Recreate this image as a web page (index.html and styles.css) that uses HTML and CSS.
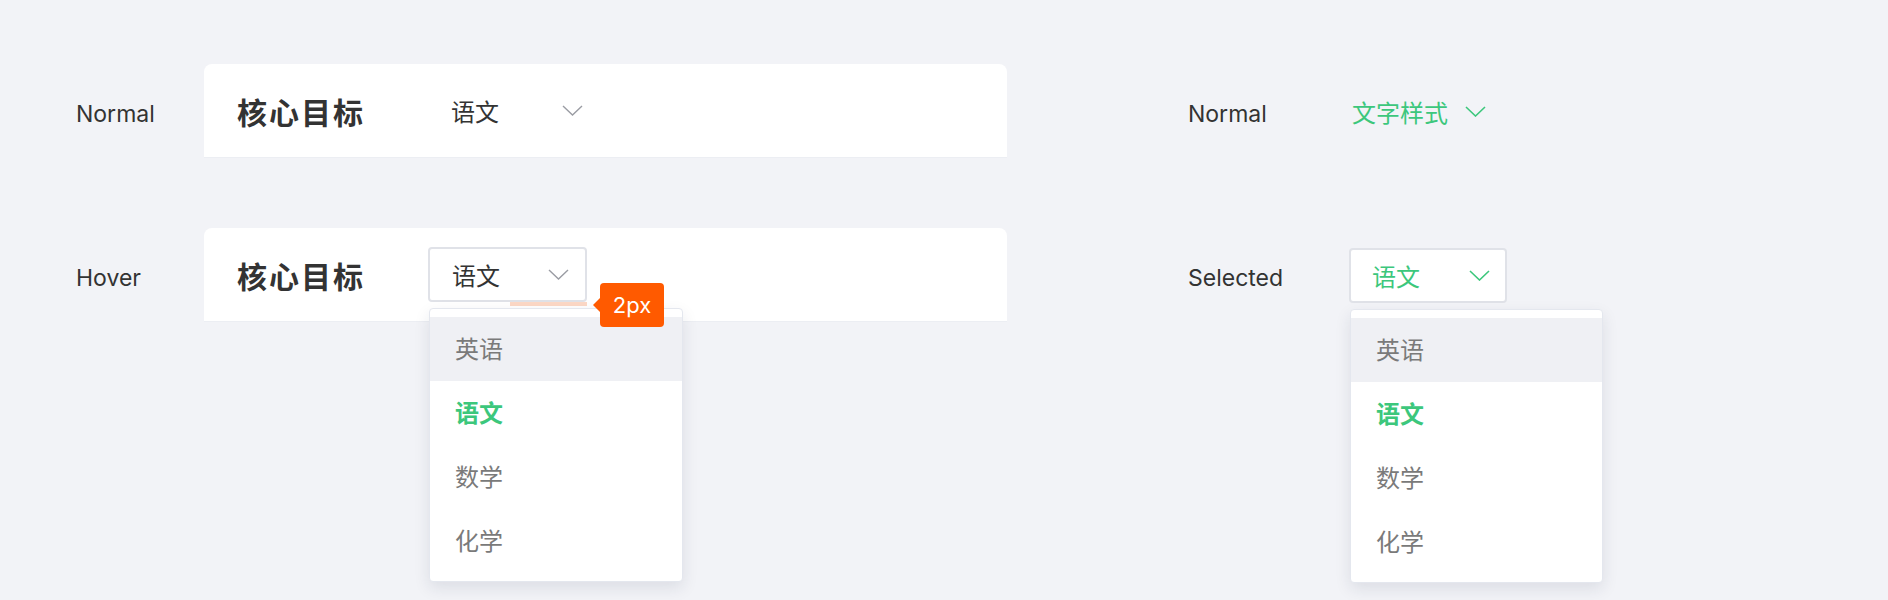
FILE: index.html
```html
<!DOCTYPE html>
<html lang="zh-CN">
<head>
<meta charset="utf-8">
<title>Select states</title>
<link rel="stylesheet" href="styles.css">
</head>
<body>
<div class="page">
  <section class="col col-left">
    <div class="row">
      <div class="label">Normal</div>
      <div class="card">
        <div class="card-title">核心目标</div>
        <div class="select select-plain">
          <span class="select-text">语文</span>
          <svg class="chev" width="21" height="11" viewBox="0 0 21 11"><polyline points="1,1 10.5,10 20,1" fill="none" stroke="#9a9ca3" stroke-width="1.4"/></svg>
        </div>
      </div>
    </div>
    <div class="row">
      <div class="label">Hover</div>
      <div class="card">
        <div class="card-title">核心目标</div>
        <div class="select select-box">
          <span class="select-text">语文</span>
          <svg class="chev" width="21" height="11" viewBox="0 0 21 11"><polyline points="1,1 10.5,10 20,1" fill="none" stroke="#9a9ca3" stroke-width="1.4"/></svg>
          <span class="gap-mark"></span>
          <span class="tag">2px</span>
          <ul class="menu">
            <li class="menu-item is-hover">英语</li>
            <li class="menu-item is-active">语文</li>
            <li class="menu-item">数学</li>
            <li class="menu-item">化学</li>
          </ul>
        </div>
      </div>
    </div>
  </section>
  <section class="col col-right">
    <div class="row">
      <div class="label label-right">Normal</div>
      <div class="select select-link">
        <span class="select-text">文字样式</span>
        <svg class="chev" width="21" height="11" viewBox="0 0 21 11"><polyline points="1,1 10.5,10 20,1" fill="none" stroke="#3cc77c" stroke-width="1.6"/></svg>
      </div>
    </div>
    <div class="row">
      <div class="label label-right">Selected</div>
      <div class="select select-box select-green">
        <span class="select-text">语文</span>
        <svg class="chev" width="21" height="11" viewBox="0 0 21 11"><polyline points="1,1 10.5,10 20,1" fill="none" stroke="#3cc77c" stroke-width="1.6"/></svg>
        <ul class="menu menu-right">
          <li class="menu-item is-hover">英语</li>
          <li class="menu-item is-active">语文</li>
          <li class="menu-item">数学</li>
          <li class="menu-item">化学</li>
        </ul>
      </div>
    </div>
  </section>
</div>
</body>
</html>
```
FILE: styles.css
```css
* { box-sizing: border-box; }
html, body {
  margin: 0;
  padding: 0;
  background: #f2f3f7;
  font-family: "Inter", "Noto Sans CJK SC", sans-serif;
  color: #333;
}
.page {
  display: flex;
  padding: 64px 0 0 76px;
  height: 600px;
  overflow: hidden;
}
.col {
  display: flex;
  flex-direction: column;
  gap: 70px;
}
.col-left { width: 931px; }
.col-right { margin-left: 181px; }
.row {
  display: flex;
  align-items: center;
  height: 94px;
}
.label {
  width: 128px;
  flex: none;
  font-size: 23px;
  color: #333;
  padding-top: 5px;
}
.label-right { width: 161px; }
.card {
  width: 803px;
  height: 94px;
  background: #fff;
  border-radius: 8px 8px 0 0;
  border-bottom: 1px solid #eceef3;
  display: flex;
  align-items: center;
  padding-left: 33px;
}
.card-title {
  width: 191px;
  flex: none;
  font-family: "Noto Sans CJK SC", sans-serif;
  font-size: 30px;
  font-weight: 700;
  letter-spacing: 2px;
  color: #333;
}
.select {
  position: relative;
  display: flex;
  align-items: center;
  font-family: "Noto Sans CJK SC", sans-serif;
  font-size: 24px;
  color: #333;
}
.select-plain {
  padding-left: 23px;
  gap: 63px;
}
.select-box {
  width: 159px;
  height: 55px;
  border: 2px solid #e0e2e8;
  border-radius: 4px;
  background: #fff;
  padding: 0 16px 0 22px;
  justify-content: space-between;
}
.select-green { width: 158px; padding: 0 15px 0 21px; }
.select-green .select-text,
.select-link { color: #3cc77c; }
.select-link {
  padding-left: 3px;
  gap: 17px;
}
.chev { display: block; flex: none; }
.gap-mark {
  position: absolute;
  left: 80px;
  right: -2px;
  top: calc(100% + 2px);
  height: 4px;
  background: #fcd8c6;
}
.tag {
  position: absolute;
  left: 170px;
  top: 34px;
  width: 64px;
  height: 44px;
  background: #ff5a00;
  color: #fff;
  border-radius: 4px;
  font-family: "Inter", sans-serif;
  font-size: 22px;
  display: flex;
  align-items: center;
  justify-content: center;
  z-index: 3;
}
.tag::before {
  content: "";
  position: absolute;
  left: -7px;
  top: 50%;
  margin-top: -7px;
  border-style: solid;
  border-width: 7px 7px 7px 0;
  border-color: transparent #ff5a00 transparent transparent;
}
.menu {
  position: absolute;
  left: -1px;
  top: calc(100% + 8px);
  width: 254px;
  margin: 0;
  padding: 8px 0;
  list-style: none;
  background: #fff;
  border: 1px solid #e4e7ee;
  border-radius: 4px;
  box-shadow: 0 6px 16px rgba(30, 40, 70, 0.10);
  z-index: 2;
}
.menu-right { width: 253px; }
.menu-item {
  height: 64px;
  display: flex;
  align-items: center;
  padding: 0 0 3px 25px;
  font-size: 24px;
  color: #7a7a7a;
}
.menu-item.is-hover { background: #eff0f4; }
.menu-item.is-active { color: #3cc77c; font-weight: 700; }
```
